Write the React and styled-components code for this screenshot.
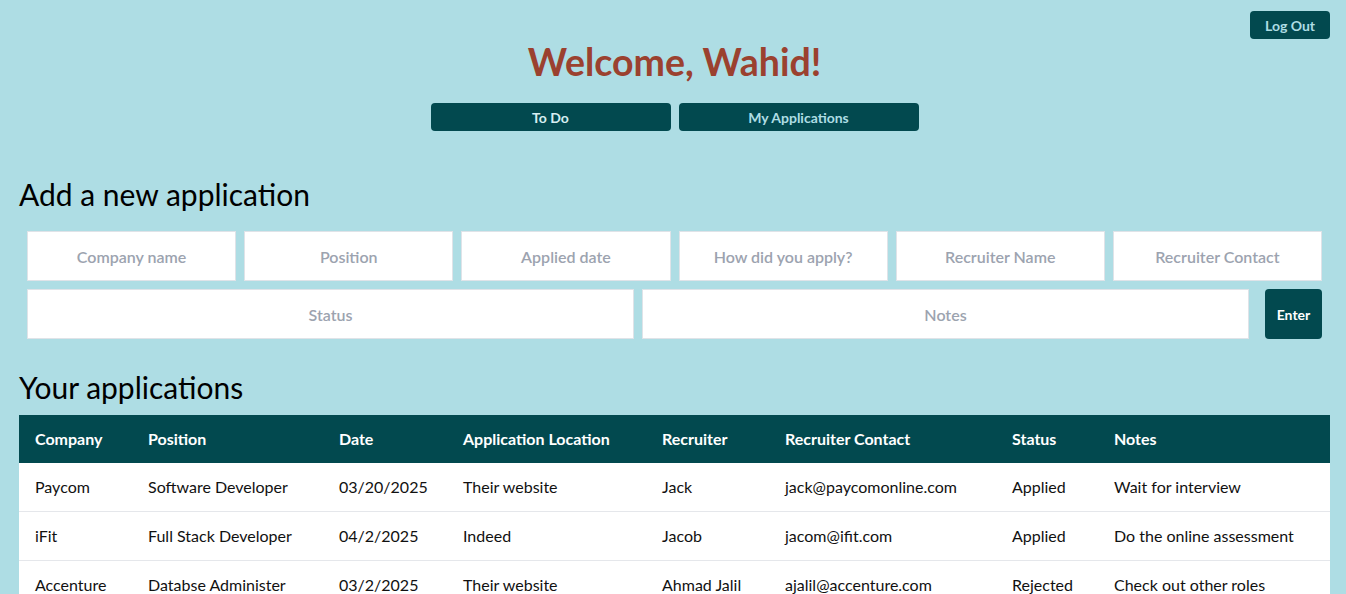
import React from 'react'
import styled, { createGlobalStyle } from 'styled-components'

const teal = '#02494f'
const sky = '#aedde4'

const GlobalStyle = createGlobalStyle`
  body {
    margin: 0;
    background: ${sky};
    font-family: Lato, "Noto Sans", sans-serif;
    color: #111;
  }
  * { box-sizing: border-box; }
`

const Page = styled.div`
  padding: 11px 16px 0 19px;
`
const TopBar = styled.div`
  display: flex;
  justify-content: flex-end;
`
const LogOut = styled.button`
  width: 80px;
  height: 28px;
  border: none;
  border-radius: 4px;
  background: ${teal};
  color: ${sky};
  font: 700 14px Lato, sans-serif;
`
const Welcome = styled.h1`
  margin: 3px 0 0;
  text-align: center;
  font-size: 37.5px;
  line-height: 40px;
  font-weight: 700;
  color: #9b412f;
`
const Nav = styled.nav`
  display: flex;
  justify-content: center;
  gap: 8px;
  margin-top: 21px;
`
const NavButton = styled.button`
  width: 240px;
  height: 28px;
  border: none;
  border-radius: 4px;
  background: ${teal};
  color: ${({ $active }) => ($active ? '#d6eef2' : sky)};
  font: 700 14px Lato, sans-serif;
`
const SectionTitle = styled.h2`
  margin: ${({ $top }) => $top}px 0 ${({ $bottom }) => $bottom}px;
  font-size: 30px;
  line-height: 36px;
  font-weight: 400;
  color: #000;
`
const Form = styled.form`
  padding: 8px;
  display: flex;
  flex-direction: column;
  gap: 8px;
`
const Row = styled.div`
  display: grid;
  grid-template-columns: ${({ $cols }) => $cols};
  gap: 8px;
`
const Input = styled.input`
  width: 100%;
  height: 50px;
  border: 1px solid #dfe3e8;
  background: #fff;
  text-align: center;
  font: 600 16px Lato, sans-serif;
  outline: none;
  &::placeholder {
    color: #9ca3af;
  }
`
const Enter = styled.button`
  height: 50px;
  margin-left: 8px;
  border: none;
  border-radius: 4px;
  background: ${teal};
  color: #fff;
  font: 700 14px Lato, sans-serif;
`
const Table = styled.table`
  width: 100%;
  border-collapse: collapse;
  table-layout: fixed;
  background: #fff;
`
const Th = styled.th`
  padding: 12px 16px;
  text-align: left;
  line-height: 24px;
  font-size: 16px;
  font-weight: 700;
  color: #fff;
  background: ${teal};
`
const Td = styled.td`
  padding: 12px 16px;
  line-height: 24px;
  font-size: 16px;
  border-bottom: 1px solid #e5e7eb;
  white-space: nowrap;
`

const fields = [
  'Company name',
  'Position',
  'Applied date',
  'How did you apply?',
  'Recruiter Name',
  'Recruiter Contact'
]

const columns = [
  ['Company', 113],
  ['Position', 191],
  ['Date', 124],
  ['Application Location', 199],
  ['Recruiter', 123],
  ['Recruiter Contact', 227],
  ['Status', 102],
  ['Notes', 232]
]

const applications = [
  ['Paycom', 'Software Developer', '03/20/2025', 'Their website', 'Jack', 'jack@paycomonline.com', 'Applied', 'Wait for interview'],
  ['iFit', 'Full Stack Developer', '04/2/2025', 'Indeed', 'Jacob', 'jacom@ifit.com', 'Applied', 'Do the online assessment'],
  ['Accenture', 'Databse Administer', '03/2/2025', 'Their website', 'Ahmad Jalil', 'ajalil@accenture.com', 'Rejected', 'Check out other roles']
]

const App = () => (
  <>
    <GlobalStyle />
    <Page>
      <TopBar>
        <LogOut>Log Out</LogOut>
      </TopBar>
      <Welcome>Welcome, Wahid!</Welcome>
      <Nav>
        <NavButton $active>To Do</NavButton>
        <NavButton>My Applications</NavButton>
      </Nav>
      <SectionTitle $top={45} $bottom={11}>Add a new application</SectionTitle>
      <Form onSubmit={e => e.preventDefault()}>
        <Row $cols='repeat(6, 1fr)'>
          {fields.map(f => (
            <Input key={f} placeholder={f} />
          ))}
        </Row>
        <Row $cols='1fr 1fr 65px'>
          <Input placeholder='Status' />
          <Input placeholder='Notes' />
          <Enter>Enter</Enter>
        </Row>
      </Form>
      <SectionTitle $top={22} $bottom={10}>Your applications</SectionTitle>
      <Table>
        <colgroup>
          {columns.map(([name, w]) => (
            <col key={name} style={{ width: w }} />
          ))}
        </colgroup>
        <thead>
          <tr>
            {columns.map(([name]) => (
              <Th key={name}>{name}</Th>
            ))}
          </tr>
        </thead>
        <tbody>
          {applications.map(app => (
            <tr key={app[0]}>
              {app.map((v, i) => (
                <Td key={i}>{v}</Td>
              ))}
            </tr>
          ))}
        </tbody>
      </Table>
    </Page>
  </>
)

export default App
